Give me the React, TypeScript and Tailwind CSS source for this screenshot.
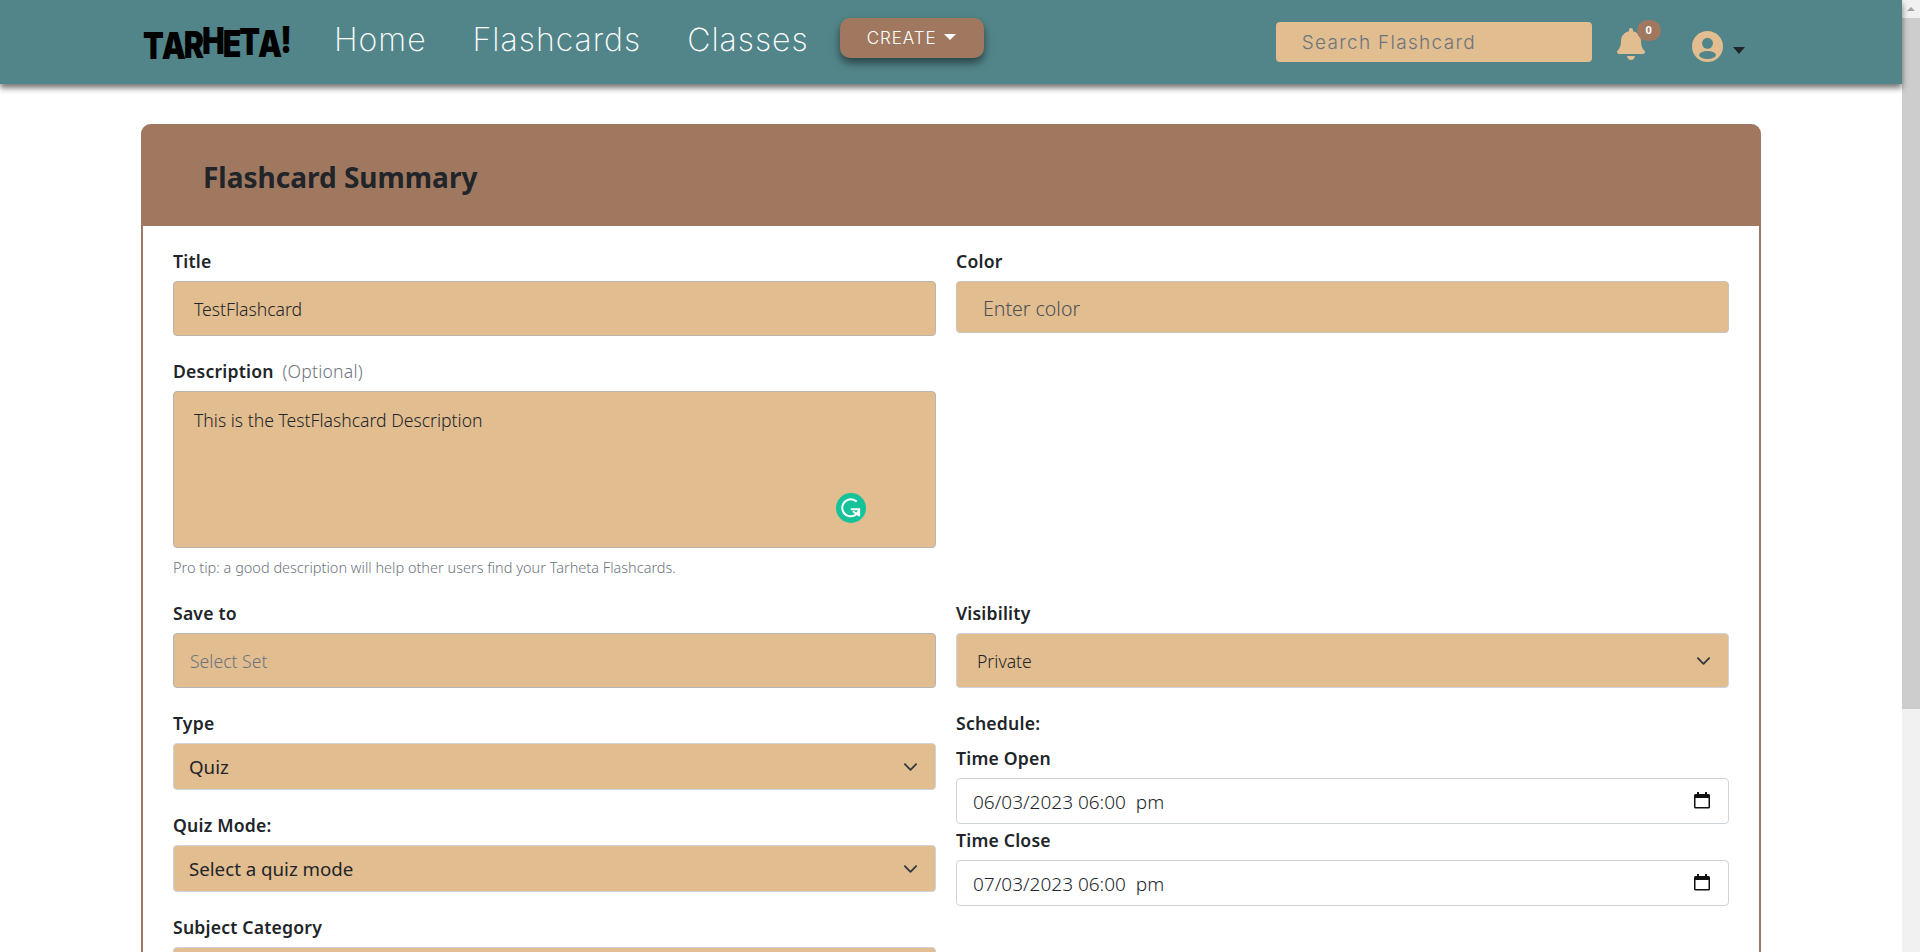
import React from "react";

const tan = "bg-[#e2bd90]";
const navLink = "text-[32px] font-extralight tracking-[1px] text-white font-['Inter',sans-serif] -mt-1";

const Label = ({ children }: { children: React.ReactNode }) => (
  <label className="block h-6 mb-[7px] text-[17.6px] tracking-[0.2px] leading-[22px] font-semibold text-[#212529]">{children}</label>
);

const Chevron = () => (
  <svg viewBox="0 0 16 16" className="absolute right-[18px] top-1/2 -translate-y-1/2 w-[15px] h-[15px] pointer-events-none" fill="none" stroke="#343a40" strokeWidth="2" strokeLinecap="round" strokeLinejoin="round">
    <path d="m2 5 6 6 6-6" />
  </svg>
);

const SelectBox = ({ value, className }: { value: string; className: string }) => (
  <div className="relative">
    <select defaultValue={value} className={`block w-full appearance-none rounded border border-[#ced4da] ${tan} pt-0.5 outline-none ${className}`}>
      <option>{value}</option>
    </select>
    <Chevron />
  </div>
);

const DateField = ({ value }: { value: string }) => (
  <div className="flex items-center justify-between h-[46px] rounded border border-[#ced4da] bg-white pl-4 pr-[18px] text-[19px] font-light text-[#212529]">
    <span className="mt-[3px] whitespace-pre">{value}</span>
    <svg viewBox="0 0 16 17" className="w-4 h-[17px] -mt-px" fill="#111">
      <path d="M3 0h2v2h6V0h2v2h1.500A1.500 1.500 0 0 1 16 3.500V15a1.500 1.500 0 0 1-1.500 1.500h-13A1.500 1.500 0 0 1 0 15V3.500A1.500 1.500 0 0 1 1.500 2H3V0Zm-1.500 6v8.800c0 .2.100.3.300.3h12.400c.2 0 .3-.1.300-.3V6H1.500Z" />
    </svg>
  </div>
);

const Logo = () => {
  const letters: [string, string][] = [
    ["T", "translate-y-[3px]"],
    ["A", "translate-y-[3px]"],
    ["R", "translate-y-[2px]"],
    ["H", "-translate-y-[2px]"],
    ["E", "translate-y-[1px]"],
    ["T", "-translate-y-[1px]"],
    ["A", "translate-y-[1px]"],
    ["!", "-translate-y-[3px]"],
  ];
  return (
    <a className="flex w-[147px] origin-left scale-x-[0.82] text-[37px] leading-none font-black text-black tracking-[-2.5px] font-['Inter',sans-serif]">
      {letters.map(([l, offset], i) => (
        <span key={i} className={`inline-block ${offset}`}>{l}</span>
      ))}
    </a>
  );
};

const Navbar = () => (
  <nav className="flex items-center h-[84px] bg-[#528589] shadow-[0_4px_6px_rgba(0,0,0,0.55)] pl-[143px] relative z-10">
    <Logo />
    <a className={`ml-11 ${navLink}`}>Home</a>
    <a className={`ml-[46px] ${navLink}`}>Flashcards</a>
    <a className={`ml-[46px] ${navLink}`}>Classes</a>
    <button className="flex items-center justify-center gap-2 ml-[31px] -mt-[8px] w-[144px] h-10 pt-0.5 rounded-[10px] bg-[#a07860] text-white text-[17px] font-light tracking-[0.9px] shadow-[0_5px_8px_rgba(0,0,0,0.5)] font-['Inter',sans-serif]">
      CREATE
      <span className="border-x-[6px] border-x-transparent border-t-[6px] border-t-white -mt-1" />
    </button>
    <input
      placeholder="Search Flashcard"
      className={`ml-[292px] w-[316px] h-10 rounded ${tan} pl-[26px] text-[19px] tracking-[1.3px] text-[#6c757d] placeholder:text-[#6c757d] font-light font-['Inter',sans-serif] outline-none`}
    />
    <div className="relative ml-[25px] w-7 h-8 mt-1">
      <svg viewBox="0 0 448 512" className="w-7 h-8" fill="#e2bd90">
        <path d="M224 512c35.300 0 64-28.700 64-64H160c0 35.300 28.700 64 64 64zm215.400-149.700c-19.300-20.800-55.500-52-55.500-154.300 0-77.700-54.500-139.900-127.900-155.200V32c0-17.700-14.300-32-32-32s-32 14.300-32 32v20.800C118.600 68.100 64.100 130.300 64.100 208c0 102.300-36.200 133.500-55.500 154.300-6 6.400-8.700 14.100-8.600 21.700.1 16.400 13 32 32.100 32h383.800c19.100 0 32-15.600 32.100-32 .1-7.600-2.600-15.300-8.600-21.700z" />
      </svg>
      <span className="absolute -top-2 left-5 flex items-center justify-center w-6 h-[21px] rounded-full bg-[#a07860] text-white text-[11px] font-bold font-['Noto_Sans',sans-serif]">0</span>
    </div>
    <svg viewBox="0 0 31 31" className="ml-[47px] w-[31px] h-[31px] mt-[9px]">
      <circle cx="15.500" cy="15.500" r="15.500" fill="#e2bd90" />
      <circle cx="15.500" cy="12.300" r="5.500" fill="#528589" />
      <ellipse cx="15.500" cy="24" rx="8.500" ry="4" fill="#528589" />
    </svg>
    <span className="ml-[10px] mt-4 border-x-[6px] border-x-transparent border-t-[7px] border-t-[#212529]" />
  </nav>
);

const Form = () => (
  <div className="px-[30px] pt-6 grid grid-cols-[763px_773px] gap-x-5">
    <div className="mb-6">
      <Label>Title</Label>
      <input defaultValue="TestFlashcard" className={`block w-full h-[55px] rounded border border-[#b9b4ad] ${tan} px-5 text-[17.6px] font-light text-[#212529] outline-none`} />
    </div>
    <div className="mb-6">
      <Label>Color</Label>
      <input placeholder="Enter color" className={`block w-full h-[52px] rounded border border-[#c9c4bb] ${tan} px-[26px] pt-0.5 text-[19.5px] font-light text-[#495057] placeholder:text-[#495057] outline-none`} />
    </div>

    <div className="mb-6">
      <Label>
        Description <span className="ml-1 font-light text-[#6c757d]">(Optional)</span>
      </Label>
      <div className="relative">
        <textarea
          defaultValue="This is the TestFlashcard Description"
          className={`block w-full h-[157px] rounded border border-[#b9b4ad] ${tan} px-5 py-[15px] text-[17.6px] font-light text-[#212529] outline-none resize-none`}
        />
        <span className="absolute right-[70px] bottom-[25px] w-[30px] h-[30px] rounded-full bg-[#15c39a]">
          <svg viewBox="0 0 24 24" className="w-[30px] h-[30px]" fill="none" stroke="#fff" strokeWidth="1.600" strokeLinecap="round" strokeLinejoin="round">
            <path d="M16 6.500A6.800 6.800 0 1 0 18.500 13H12.500" />
            <path d="M18.500 13v5M14 15l4.500 3" />
          </svg>
        </span>
      </div>
      <p className="mt-[9px] h-5 mb-px text-[14.500px] leading-5 font-light text-[#6c757d]">Pro tip: a good description will help other users find your Tarheta Flashcards.</p>
    </div>
    <div />

    <div className="mb-6">
      <Label>Save to</Label>
      <input placeholder="Select Set" className={`block w-full h-[55px] rounded border border-[#b3b5b5] ${tan} px-4 text-[17.6px] font-light placeholder:text-[#6c757d] outline-none`} />
    </div>
    <div className="mb-6">
      <Label>Visibility</Label>
      <SelectBox value="Private" className="h-[55px] pl-5 text-[17.6px] font-light text-[#212529]" />
    </div>

    <div>
      <div className="mb-6">
        <Label>Type</Label>
        <SelectBox value="Quiz" className="h-[47px] pl-[15px] text-[18.7px] font-normal text-[#212529]" />
      </div>
      <div className="mb-6">
        <Label>Quiz Mode:</Label>
        <SelectBox value="Select a quiz mode" className="h-[47px] pl-[15px] text-[18.7px] font-normal text-[#212529]" />
      </div>
      <Label>Subject Category</Label>
      <SelectBox value="Select a subject" className="h-[47px] pl-[15px] text-[18.7px] font-normal text-[#212529]" />
    </div>
    <div>
      <div className="mb-[11px] h-6 text-[17.6px] tracking-[0.2px] leading-[22px] font-semibold text-[#212529]">Schedule:</div>
      <Label>Time Open</Label>
      <DateField value="06/03/2023 06:00  pm" />
      <div className="h-[5px]" />
      <Label>Time Close</Label>
      <DateField value="07/03/2023 06:00  pm" />
    </div>
  </div>
);

// fake browser scrollbar, the page itself is cut at the window height
const ScrollBar = () => (
  <div className="flex flex-col w-[18px] h-full bg-[#f1f1f1]">
    <div className="flex items-center justify-center h-[18px] bg-[#f1f1f1]">
      <span className="border-x-[4px] border-x-transparent border-b-[4px] border-b-[#a3a3a3]" />
    </div>
    <div className="h-[691px] bg-[#cdcdcd]" />
  </div>
);

export default function App() {
  return (
    <div className="flex h-[952px] overflow-hidden bg-white font-['Noto_Sans','Open_Sans',sans-serif]">
      <div className="flex-1 min-w-0">
        <Navbar />
        <main className="mt-10 mr-[141px] ml-[141px]">
          <section className="rounded-t-[10px] border-x-2 border-[#a07860]">
            <header className="-mx-0.5 flex items-center h-[102px] rounded-t-[10px] bg-[#a07860] pl-[62px] pt-1">
              <h1 className="text-[28px] font-bold text-[#212529]">Flashcard Summary</h1>
            </header>
            <Form />
          </section>
        </main>
      </div>
      <ScrollBar />
    </div>
  );
}
